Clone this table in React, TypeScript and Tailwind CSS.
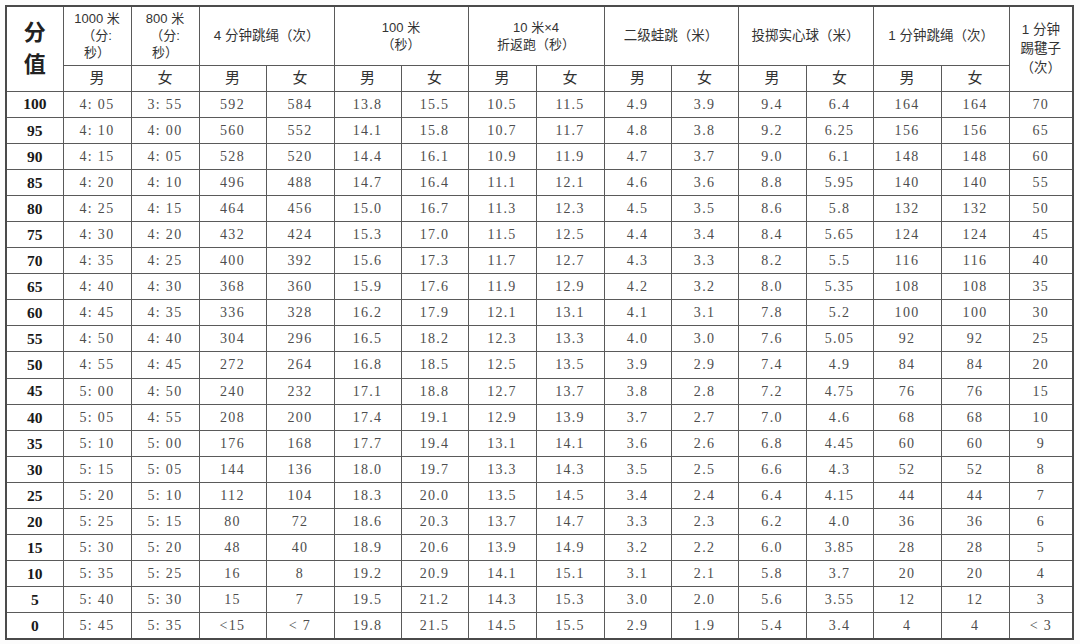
const rows: string[][] = [
  ["100", "4: 05", "3: 55", "592", "584", "13.8", "15.5", "10.5", "11.5", "4.9", "3.9", "9.4", "6.4", "164", "164", "70"],
  ["95", "4: 10", "4: 00", "560", "552", "14.1", "15.8", "10.7", "11.7", "4.8", "3.8", "9.2", "6.25", "156", "156", "65"],
  ["90", "4: 15", "4: 05", "528", "520", "14.4", "16.1", "10.9", "11.9", "4.7", "3.7", "9.0", "6.1", "148", "148", "60"],
  ["85", "4: 20", "4: 10", "496", "488", "14.7", "16.4", "11.1", "12.1", "4.6", "3.6", "8.8", "5.95", "140", "140", "55"],
  ["80", "4: 25", "4: 15", "464", "456", "15.0", "16.7", "11.3", "12.3", "4.5", "3.5", "8.6", "5.8", "132", "132", "50"],
  ["75", "4: 30", "4: 20", "432", "424", "15.3", "17.0", "11.5", "12.5", "4.4", "3.4", "8.4", "5.65", "124", "124", "45"],
  ["70", "4: 35", "4: 25", "400", "392", "15.6", "17.3", "11.7", "12.7", "4.3", "3.3", "8.2", "5.5", "116", "116", "40"],
  ["65", "4: 40", "4: 30", "368", "360", "15.9", "17.6", "11.9", "12.9", "4.2", "3.2", "8.0", "5.35", "108", "108", "35"],
  ["60", "4: 45", "4: 35", "336", "328", "16.2", "17.9", "12.1", "13.1", "4.1", "3.1", "7.8", "5.2", "100", "100", "30"],
  ["55", "4: 50", "4: 40", "304", "296", "16.5", "18.2", "12.3", "13.3", "4.0", "3.0", "7.6", "5.05", "92", "92", "25"],
  ["50", "4: 55", "4: 45", "272", "264", "16.8", "18.5", "12.5", "13.5", "3.9", "2.9", "7.4", "4.9", "84", "84", "20"],
  ["45", "5: 00", "4: 50", "240", "232", "17.1", "18.8", "12.7", "13.7", "3.8", "2.8", "7.2", "4.75", "76", "76", "15"],
  ["40", "5: 05", "4: 55", "208", "200", "17.4", "19.1", "12.9", "13.9", "3.7", "2.7", "7.0", "4.6", "68", "68", "10"],
  ["35", "5: 10", "5: 00", "176", "168", "17.7", "19.4", "13.1", "14.1", "3.6", "2.6", "6.8", "4.45", "60", "60", "9"],
  ["30", "5: 15", "5: 05", "144", "136", "18.0", "19.7", "13.3", "14.3", "3.5", "2.5", "6.6", "4.3", "52", "52", "8"],
  ["25", "5: 20", "5: 10", "112", "104", "18.3", "20.0", "13.5", "14.5", "3.4", "2.4", "6.4", "4.15", "44", "44", "7"],
  ["20", "5: 25", "5: 15", "80", "72", "18.6", "20.3", "13.7", "14.7", "3.3", "2.3", "6.2", "4.0", "36", "36", "6"],
  ["15", "5: 30", "5: 20", "48", "40", "18.9", "20.6", "13.9", "14.9", "3.2", "2.2", "6.0", "3.85", "28", "28", "5"],
  ["10", "5: 35", "5: 25", "16", "8", "19.2", "20.9", "14.1", "15.1", "3.1", "2.1", "5.8", "3.7", "20", "20", "4"],
  ["5", "5: 40", "5: 30", "15", "7", "19.5", "21.2", "14.3", "15.3", "3.0", "2.0", "5.6", "3.55", "12", "12", "3"],
  ["0", "5: 45", "5: 35", "<15", "< 7", "19.8", "21.5", "14.5", "15.5", "2.9", "1.9", "5.4", "3.4", "4", "4", "< 3"],
];

const widths = [57, 68, 68, 67, 68, 67, 67, 68, 68, 67, 67, 68, 67, 68, 68, 64];

const sans = "font-['Liberation_Sans','Noto_Sans_CJK_SC',sans-serif]";
const serif = "font-['Liberation_Serif','Noto_Sans_CJK_SC',serif]";
const cell = "border border-[#5a5a5a] text-center align-middle p-0";

export default function App() {
  return (
    <div className="w-[1080px] h-[644px] bg-[#fcfcfc] pt-[5px] pl-[5px] overflow-hidden">
      <table className="border-collapse table-fixed w-[1067px] bg-white border-2 border-[#4a4a4a]">
        <colgroup>
          {widths.map((w, i) => (
            <col key={i} style={{ width: w }} />
          ))}
        </colgroup>
        <thead className={`${sans} text-[#333] font-normal`}>
          <tr className="h-[59px] text-[13px] leading-[17px]">
            {/* score column spans both header rows */}
            <th rowSpan={2} className={`${cell} text-[22px] leading-[32px] font-semibold text-[#222] ${sans}`}>
              分<br />值
            </th>
            <th className={`${cell} font-normal`}>
              1000 米<br />（分:<br />秒）
            </th>
            <th className={`${cell} font-normal`}>
              800 米<br />（分:<br />秒）
            </th>
            <th colSpan={2} className={`${cell} font-normal text-[13.5px]`}>
              4 分钟跳绳（次）
            </th>
            <th colSpan={2} className={`${cell} font-normal`}>
              100 米<br />（秒）
            </th>
            <th colSpan={2} className={`${cell} font-normal`}>
              10 米×4<br />折返跑（秒）
            </th>
            <th colSpan={2} className={`${cell} font-normal text-[13.5px]`}>
              二级蛙跳（米）
            </th>
            <th colSpan={2} className={`${cell} font-normal text-[13.5px]`}>
              投掷实心球（米）
            </th>
            <th colSpan={2} className={`${cell} font-normal text-[13.5px]`}>
              1 分钟跳绳（次）
            </th>
            <th rowSpan={2} className={`${cell} font-normal text-[13.5px] leading-[19px]`}>
              1 分钟<br />踢毽子<br />（次）
            </th>
          </tr>
          <tr className="h-[26px] text-[15px]">
            {Array.from({ length: 14 }).map((_, i) => (
              <th key={i} className={`${cell} font-normal`}>
                {i % 2 === 0 ? "男" : "女"}
              </th>
            ))}
          </tr>
        </thead>
        <tbody className={serif}>
          {rows.map((r) => (
            <tr key={r[0]} className="h-[26.1px]">
              {r.map((v, j) =>
                j === 0 ? (
                  <td key={j} className={`${cell} text-[15.5px] font-bold text-[#1a1a1a]`}>
                    {v}
                  </td>
                ) : (
                  <td key={j} className={`${cell} text-[14px] text-[#4d4d4d] tracking-[1.3px]`}>
                    {v}
                  </td>
                ),
              )}
            </tr>
          ))}
        </tbody>
      </table>
    </div>
  );
}
